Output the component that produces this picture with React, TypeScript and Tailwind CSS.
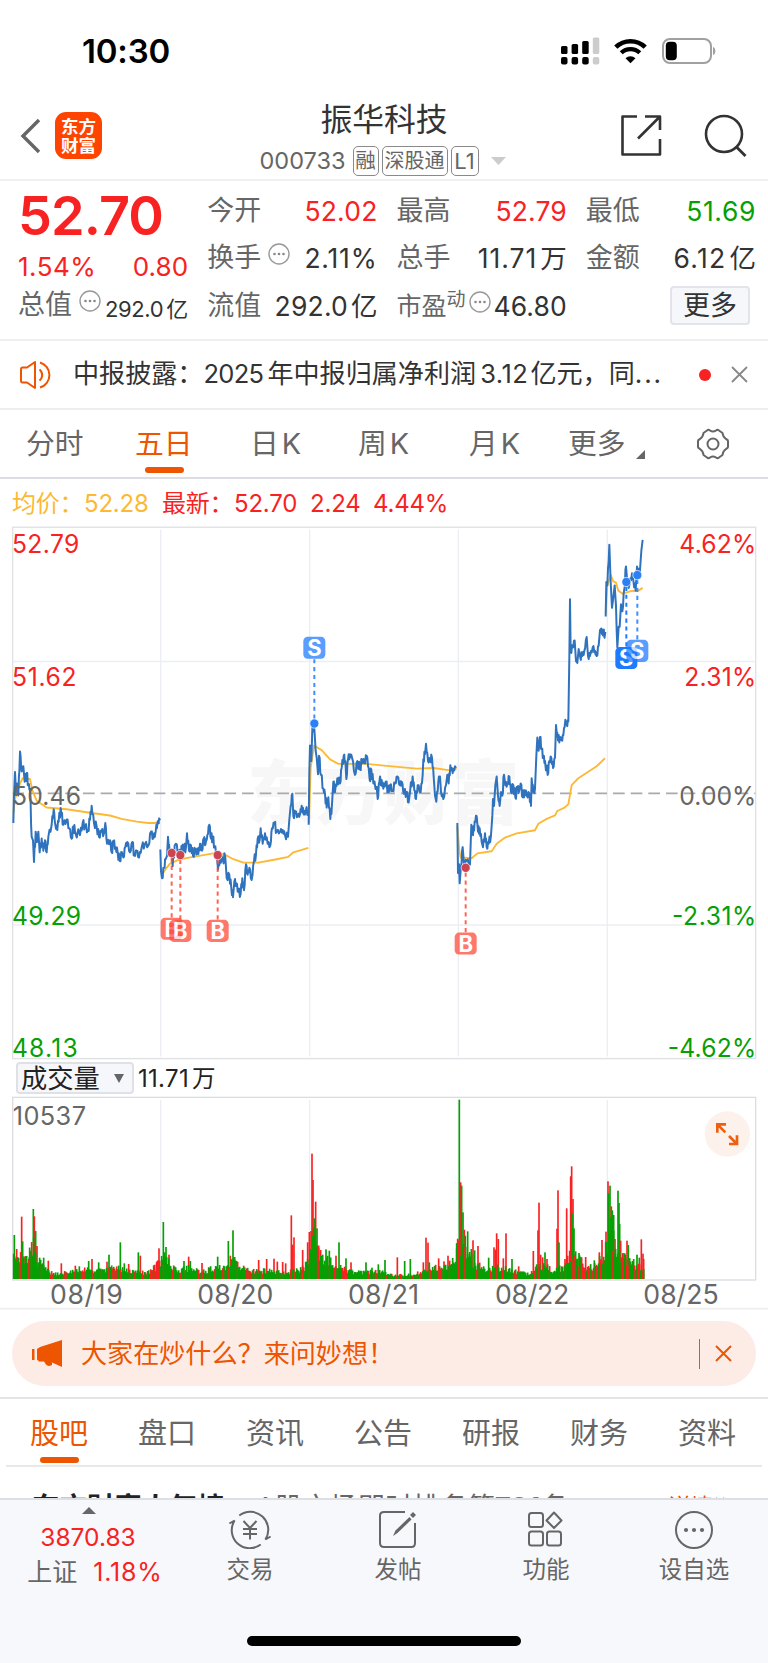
import React from "react";

type Point = [number, number];
type Bar = [number, number, string];

const RED = "#f82222";
const GREEN = "#069f04";
const BLUE = "#2f73bf";
const GRAY = "#666666";

const priceDays: Point[][] = [
  [
    [40, 880], [42, 800], [45, 732], [48, 790], [51, 765], [55, 800], [60, 672], [65, 730], [70, 715], [74, 760],
    [80, 735], [85, 770], [90, 780], [95, 920], [99, 930], [102, 993], [107, 905], [111, 935], [115, 905], [119, 965],
    [125, 925], [130, 960], [135, 930], [140, 965], [145, 920], [155, 885], [161, 840], [166, 885], [172, 900],
    [178, 850], [184, 850], [190, 885], [200, 870], [208, 895], [215, 925], [220, 890], [225, 905], [240, 915],
    [248, 880], [255, 890], [264, 900], [270, 870], [275, 830], [282, 880], [290, 890], [297, 920], [304, 905],
    [312, 910], [316, 880], [321, 940], [330, 930], [335, 965], [340, 935], [347, 950], [353, 965], [359, 990],
    [366, 965], [370, 980], [376, 950], [382, 935], [390, 965], [397, 935], [403, 975], [410, 960], [417, 980],
    [425, 950], [435, 940], [445, 945], [453, 905], [460, 925], [467, 905], [473, 875], [480, 872],
  ],
  [
    [481, 957], [483, 1020], [486, 1040], [492, 1010], [497, 985], [501, 975], [504, 920], [509, 965], [515, 965],
    [518, 1005], [524, 945], [528, 940], [535, 965], [541, 975], [546, 950], [552, 955], [558, 950], [561, 910],
    [567, 960], [573, 945], [579, 975], [586, 955], [595, 970], [600, 940], [606, 960], [611, 925], [617, 940],
    [622, 915], [628, 885], [633, 925], [638, 920], [644, 950], [650, 965], [654, 1015], [660, 985], [668, 985],
    [676, 980], [680, 1040], [688, 1030], [694, 1070], [699, 1095], [703, 1050], [709, 1055], [715, 1080],
    [722, 1085], [727, 1040], [732, 1075], [738, 1000], [743, 1030], [748, 1010], [755, 1045], [762, 990],
    [768, 970], [773, 925], [779, 930], [782, 895], [788, 940], [795, 910], [803, 940], [811, 945], [816, 895],
    [823, 880], [830, 905], [840, 905], [848, 900], [855, 915], [864, 920], [868, 870], [872, 830], [877, 795],
    [880, 860], [886, 850], [893, 860], [900, 855], [905, 830], [911, 855], [917, 845], [925, 845],
  ],
  [
    [926, 885], [928, 730], [930, 655], [934, 700], [937, 605], [943, 605], [947, 670], [950, 690], [954, 738],
    [957, 685], [963, 740], [970, 780], [975, 795], [980, 835], [985, 805], [991, 868], [996, 825], [1000, 760],
    [1005, 790], [1012, 750], [1020, 765], [1025, 720], [1031, 685], [1036, 700], [1039, 752], [1044, 695],
    [1050, 680], [1056, 690], [1065, 740], [1072, 700], [1080, 725], [1086, 695], [1093, 705], [1100, 685],
    [1106, 720], [1109, 755], [1114, 725], [1120, 765], [1130, 775], [1133, 810], [1138, 760], [1145, 755],
    [1150, 780], [1157, 760], [1165, 790], [1170, 770], [1178, 785], [1185, 765], [1192, 745], [1200, 770],
    [1205, 760], [1212, 795], [1220, 790], [1226, 820], [1230, 790], [1238, 745], [1243, 785], [1248, 810],
    [1253, 770], [1262, 790], [1268, 740], [1270, 695], [1275, 680], [1278, 650], [1284, 700], [1290, 695],
    [1296, 690], [1301, 745], [1305, 800], [1309, 818], [1315, 760], [1320, 745], [1323, 790], [1330, 810],
    [1338, 770], [1342, 740], [1346, 765], [1351, 712], [1358, 735], [1365, 715], [1368, 720],
  ],
  [
    [1372, 880], [1374, 1025], [1377, 1000], [1379, 1055], [1383, 1005], [1388, 950], [1392, 1000], [1400, 990],
    [1410, 1000], [1414, 885], [1419, 915], [1424, 875], [1430, 860], [1434, 905], [1439, 895], [1445, 935],
    [1449, 950], [1455, 910], [1460, 950], [1466, 940], [1473, 915], [1477, 860], [1479, 810], [1482, 830],
    [1486, 770], [1490, 745], [1494, 800], [1499, 830], [1503, 790], [1507, 800], [1512, 740], [1516, 770],
    [1522, 765], [1528, 745], [1533, 790], [1540, 770], [1546, 805], [1552, 780], [1558, 785], [1562, 765],
    [1568, 805], [1574, 785], [1580, 800], [1588, 795], [1593, 830], [1595, 750], [1600, 790], [1605, 780],
    [1609, 685], [1612, 632], [1616, 670], [1620, 630], [1625, 665], [1630, 690], [1635, 700], [1643, 740],
    [1648, 700], [1654, 690], [1659, 720], [1665, 690], [1668, 595], [1674, 640], [1680, 630], [1685, 640],
    [1690, 625], [1696, 580], [1700, 595], [1705, 585], [1708, 400], [1710, 230], [1712, 380], [1718, 370],
    [1724, 350], [1728, 410], [1732, 415], [1736, 375], [1740, 395], [1747, 395], [1753, 380], [1760, 340],
    [1764, 395], [1770, 395], [1778, 370], [1785, 380], [1790, 395], [1796, 365], [1800, 320], [1804, 315],
    [1809, 335], [1816, 325],
  ],
  [
    [1817, 280], [1819, 180], [1822, 190], [1828, 72], [1832, 180], [1836, 255], [1840, 225], [1844, 190],
    [1848, 250], [1850, 320], [1852, 370], [1856, 310], [1859, 310], [1863, 245], [1867, 265], [1873, 200],
    [1878, 135], [1882, 180], [1888, 190], [1896, 155], [1900, 175], [1907, 205], [1911, 135], [1915, 150],
    [1920, 145], [1924, 90], [1928, 58],
  ],
];

const averageLines = [
  "M40 850L45 810L60 765L68 750L90 752L97 785L110 815L140 835L200 840L270 850L330 858L365 868L410 876L445 880L480 880",
  "M486 1030L500 1010L510 998L540 985L580 978L640 968L672 970L700 985L730 995L775 995L830 985L865 978L880 965L925 952",
  "M927 880L932 720L942 655L965 668L990 695L1015 708L1100 708L1160 714L1250 722L1300 720L1350 727L1370 722",
  "M1372 890L1378 960L1382 980L1415 982L1432 968L1475 962L1490 940L1515 922L1550 910L1605 901L1615 882L1640 868L1665 858L1672 845L1692 836L1705 825L1715 770L1735 750L1790 715L1815 692",
  "M1817 270L1822 190L1832 160L1840 178L1848 182L1855 205L1868 214L1890 207L1915 205L1928 197",
];

const markers = [
  { x: 515, y: 967, boxY: 1187, side: "B", dim: true },
  { x: 541, y: 973, boxY: 1193, side: "B", dim: true },
  { x: 653, y: 973, boxY: 1193, side: "B", dim: true },
  { x: 943, y: 591, boxY: 371, side: "S", dim: true },
  { x: 1397, y: 1010, boxY: 1230, side: "B", dim: true },
  { x: 1879, y: 180, boxY: 401, side: "S", dim: false },
  { x: 1912, y: 160, boxY: 380, side: "S", dim: true },
];

const leftLabels = [
  { text: "52.79", y: 96, fill: RED, width: 196 },
  { text: "51.62", y: 481, fill: RED, width: 188 },
  { text: "50.46", y: 828, fill: GRAY, width: 201 },
  { text: "49.29", y: 1175, fill: GREEN, width: 201 },
  { text: "48.13", y: 1560, fill: GREEN, width: 191 },
];

const rightLabels = [
  { text: "4.62%", y: 96, fill: RED, width: 226 },
  { text: "2.31%", y: 481, fill: RED, width: 211 },
  { text: "0.00%", y: 828, fill: GRAY, width: 226 },
  { text: "-2.31%", y: 1175, fill: GREEN, width: 248 },
  { text: "-4.62%", y: 1560, fill: GREEN, width: 261 },
];

const dates = [
  { text: "08/19", x: 152, width: 214 },
  { text: "08/20", x: 594, width: 224 },
  { text: "08/21", x: 1046, width: 209 },
  { text: "08/22", x: 1487, width: 219 },
  { text: "08/25", x: 1932, width: 222 },
];

// average height of the volume bars along the x axis
const volumeBase: Point[] = [
  [40, 60], [60, 70], [85, 60], [98, 110], [112, 60], [125, 40], [150, 20], [180, 16], [230, 25], [270, 28], [300, 25],
  [350, 35], [380, 25], [410, 22], [440, 18], [465, 35], [480, 60], [500, 65], [515, 35], [545, 28], [580, 35],
  [600, 20], [650, 35], [680, 30], [700, 60], [720, 30], [760, 25], [800, 25], [860, 20], [880, 30], [910, 32],
  [925, 60], [940, 120], [960, 70], [1000, 45], [1040, 30], [1060, 20], [1100, 20], [1140, 25], [1180, 10],
  [1230, 14], [1265, 20], [1290, 28], [1320, 40], [1360, 45], [1375, 110], [1400, 70], [1430, 45], [1460, 25],
  [1490, 35], [1530, 30], [1565, 20], [1590, 14], [1610, 35], [1640, 45], [1660, 20], [1680, 35], [1700, 40],
  [1720, 60], [1735, 60], [1760, 35], [1790, 40], [1810, 70], [1830, 160], [1850, 85], [1890, 55], [1910, 40],
  [1934, 38],
];

const volumeSpikes: Bar[] = [
  [43, 132, GREEN], [50, 90, RED], [65, 187, RED], [68, 113, GREEN], [72, 68, RED], [88, 66, GREEN],
  [100, 210, GREEN], [103, 188, RED], [107, 144, GREEN], [111, 99, RED], [131, 64, GREEN], [145, 55, RED],
  [184, 47, RED], [226, 40, RED], [238, 38, GREEN], [266, 54, GREEN], [276, 60, RED], [296, 50, GREEN],
  [321, 52, RED], [327, 73, GREEN], [361, 110, GREEN], [373, 47, GREEN], [386, 45, RED], [415, 80, GREEN],
  [421, 70, RED], [470, 52, RED], [477, 92, RED], [490, 171, GREEN], [498, 96, GREEN], [507, 73, RED],
  [552, 54, GREEN], [566, 67, RED], [571, 54, GREEN], [606, 48, RED], [653, 67, GREEN], [685, 114, GREEN],
  [691, 70, RED], [699, 146, GREEN], [704, 66, GREEN], [731, 40, RED], [776, 57, RED], [800, 60, RED],
  [822, 61, RED], [832, 52, RED], [848, 51, RED], [857, 47, RED], [874, 191, RED], [878, 103, RED],
  [882, 125, RED], [908, 87, RED], [923, 110, RED], [928, 141, RED], [933, 144, RED], [936, 376, RED],
  [939, 297, RED], [943, 182, GREEN], [947, 232, RED], [951, 152, GREEN], [956, 93, GREEN], [962, 87, RED],
  [978, 89, GREEN], [988, 85, GREEN], [1008, 70, RED], [1017, 110, GREEN], [1038, 62, GREEN], [1053, 50, RED],
  [1098, 50, GREEN], [1116, 34, GREEN], [1135, 44, GREEN], [1155, 57, GREEN], [1192, 65, RED], [1214, 54, GREEN],
  [1231, 60, GREEN], [1270, 50, RED], [1278, 124, RED], [1284, 109, RED], [1288, 50, GREEN], [1316, 62, RED],
  [1332, 53, RED], [1344, 70, RED], [1358, 63, GREEN], [1370, 92, GREEN], [1373, 121, RED], [1378, 538, GREEN],
  [1382, 290, RED], [1385, 280, GREEN], [1389, 200, GREEN], [1393, 148, RED], [1396, 130, GREEN],
  [1403, 143, GREEN], [1414, 90, GREEN], [1419, 116, RED], [1424, 86, GREEN], [1434, 99, RED], [1466, 64, GREEN],
  [1482, 95, RED], [1486, 88, RED], [1490, 137, RED], [1495, 120, RED], [1510, 62, RED], [1518, 137, RED],
  [1536, 60, GREEN], [1556, 38, RED], [1600, 84, RED], [1614, 146, RED], [1617, 229, RED], [1622, 73, RED],
  [1628, 65, RED], [1635, 80, GREEN], [1641, 60, RED], [1671, 151, RED], [1674, 266, RED], [1677, 110, GREEN],
  [1695, 60, RED], [1700, 212, RED], [1703, 70, RED], [1709, 85, RED], [1712, 308, RED], [1715, 338, RED],
  [1719, 240, RED], [1717, 197, GREEN], [1722, 152, GREEN], [1727, 83, GREEN], [1737, 78, GREEN],
  [1757, 66, RED], [1783, 56, GREEN], [1798, 80, RED], [1806, 117, RED], [1818, 142, RED], [1824, 293, RED],
  [1826, 257, GREEN], [1830, 280, GREEN], [1834, 218, RED], [1837, 206, GREEN], [1841, 192, GREEN],
  [1845, 120, RED], [1854, 265, GREEN], [1857, 228, GREEN], [1859, 165, GREEN], [1862, 115, RED],
  [1869, 78, RED], [1876, 73, RED], [1881, 115, RED], [1885, 102, GREEN], [1898, 54, GREEN], [1911, 73, GREEN],
  [1918, 64, GREEN], [1924, 119, RED], [1929, 76, RED], [1931, 60, RED],
];

const noise = (n: number) => {
  const v = Math.sin(n * 12.9898) * 43758.5453;
  return v - Math.floor(v);
};

const toPath = (points: Point[]) => {
  let d = `M${points[0][0]} ${points[0][1]}`;
  for (let i = 1; i < points.length; i++) {
    const [x0, y0] = points[i - 1];
    const [x1, y1] = points[i];
    if (x1 - x0 > 4) {
      const s = noise(x0 + i) > 0.5 ? 1 : -1;
      const amp = 5 + noise(i) * 9;
      d += `L${x0 + (x1 - x0) * 0.35} ${y0 + (y1 - y0) * 0.35 + s * amp}`;
      d += `L${x0 + (x1 - x0) * 0.65} ${y0 + (y1 - y0) * 0.65 - s * amp}`;
    }
    d += `L${x1} ${y1}`;
  }
  return d;
};

const baseAt = (x: number) => {
  const i = volumeBase.findIndex((p) => p[0] > x);
  if (i < 1) return volumeBase[volumeBase.length - 1][1];
  const [x0, y0] = volumeBase[i - 1];
  const [x1, y1] = volumeBase[i];
  return y0 + ((x - x0) / (x1 - x0)) * (y1 - y0);
};

const volumeNoise: Bar[] = [];
for (let x = 41; x < 1934; x += 3) {
  const redZone =
    (x > 150 && x < 170) || (x > 420 && x < 480) || (x > 740 && x < 800) || (x > 1740 && x < 1810) || x > 1865;
  const color = noise(x * 1.7) > (redZone ? 0.4 : 0.78) ? RED : GREEN;
  volumeNoise.push([x, baseAt(x) * (0.6 + noise(x) * 0.7), color]);
}

const More = () => (
  <svg className="size-[22px] shrink-0" viewBox="0 0 22 22">
    <circle cx="11" cy="11" r="10" fill="none" stroke="#999" strokeWidth="1.4" />
    <circle cx="6.5" cy="11" r="1.3" fill="#888" />
    <circle cx="11" cy="11" r="1.3" fill="#888" />
    <circle cx="15.5" cy="11" r="1.3" fill="#888" />
  </svg>
);

const StatusBar = () => (
  <div className="flex h-[91px] items-start justify-between pl-[82px] pr-[52px] pt-[31px]">
    <span className="text-[33px] font-semibold leading-[40px] tracking-[-0.2px] text-black">10:30</span>
    <div className="flex items-center pt-[6px]">
      <svg width="39" height="28" viewBox="0 0 39 28">
        <g fill="#000">
          <rect x="0" y="9" width="6.5" height="8" rx="1.5" />
          <rect x="10.6" y="7" width="6.5" height="10" rx="1.5" />
          <rect x="21.2" y="4" width="6.5" height="13" rx="1.5" />
          <rect x="0" y="20" width="6.5" height="7.5" rx="2" />
          <rect x="10.6" y="20" width="6.5" height="7.5" rx="2" />
          <rect x="21.2" y="20" width="6.5" height="7.5" rx="2" />
        </g>
        <g fill="#cccccc">
          <rect x="31.8" y="0.5" width="6.5" height="16.5" rx="1.5" />
          <rect x="31.8" y="20" width="6.5" height="7.5" rx="2" />
        </g>
      </svg>
      <svg className="ml-[14px]" width="33" height="26" viewBox="0 0 33 26">
        <path d="M1.8 9.2a21 21 0 0 1 29.4 0" fill="none" stroke="#000" strokeWidth="4.6" />
        <path d="M7.2 14.8a13.4 13.4 0 0 1 18.6 0" fill="none" stroke="#000" strokeWidth="4.2" />
        <path d="M11.5 20.2a7.4 7.4 0 0 1 10 0L16.5 25.2z" fill="#000" />
      </svg>
      <svg className="ml-[15px]" width="54" height="26" viewBox="0 0 54 26">
        <rect x="1" y="1" width="48" height="24" rx="7" fill="none" stroke="#a0a0a0" strokeWidth="2" />
        <rect x="3.8" y="3.8" width="11" height="18.4" rx="4" fill="#000" />
        <path d="M51 9c3.2 1 3.2 7 0 8z" fill="#a0a0a0" />
      </svg>
    </div>
  </div>
);

const Header = () => (
  <div className="flex h-[90px] items-start border-b-2 border-[#f0f0f0] pl-[20px]">
    <svg className="mt-[27px]" width="22" height="36" viewBox="0 0 22 36">
      <path d="M19 2L3 18L19 34" fill="none" stroke="#666" strokeWidth="3.4" />
    </svg>
    <div className="ml-[13px] mt-[21px] flex size-[47px] flex-col items-center justify-center rounded-[11px] bg-[#ff4400] text-[17.5px] font-bold leading-[19px] text-white">
      <span>东方</span>
      <span>财富</span>
    </div>
    <div className="ml-[136px] flex w-[292px] flex-col items-center">
      <h1 className="mt-[8px] text-[31.8px] leading-[42px] text-[#333]">振华科技</h1>
      <div className="mt-[3px] flex w-[249px] items-center text-[22px] leading-[34px] text-[#666]">
        <span className="w-[93px] text-[23.5px] tracking-[0px]">000733</span>
        <span className="flex h-[30px] w-[26px] items-center justify-center rounded-[5px] border-[1.5px] border-[#8a8a8a] text-[20.5px]">
          融
        </span>
        <span className="ml-[3px] flex h-[30px] w-[66px] items-center justify-center rounded-[5px] border-[1.5px] border-[#8a8a8a] text-[20px]">
          深股通
        </span>
        <span className="ml-[3px] flex h-[30px] w-[28px] items-center justify-center rounded-[5px] border-[1.5px] border-[#8a8a8a] text-[22px]">
          L1
        </span>
        <svg className="ml-[12px] shrink-0" width="15" height="8" viewBox="0 0 15 8">
          <path d="M0 0h15L7.5 8z" fill="#ccc" />
        </svg>
      </div>
    </div>
    <svg className="ml-[89px] mt-[23px]" width="44" height="44" viewBox="0 0 44 44">
      <path
        d="M18 2.5H3.5V40.5H41V25M26 2.5H41V16M41 2.5L19 24.5"
        fill="none"
        stroke="#333"
        strokeWidth="2.6"
        strokeLinejoin="round"
      />
    </svg>
    <svg className="ml-[41px] mt-[23px]" width="44" height="44" viewBox="0 0 44 44">
      <circle cx="20" cy="20" r="18" fill="none" stroke="#333" strokeWidth="2.6" />
      <path d="M32 32.5L41.5 42" stroke="#333" strokeWidth="2.8" />
    </svg>
  </div>
);

const Stat = ({
  label,
  value,
  unit,
  className = "tracking-[0.2px] text-[#333]",
  hint,
}: {
  label: string;
  value: string;
  unit?: string;
  className?: string;
  hint?: boolean;
}) => (
  <div className="flex h-[47.5px] items-center whitespace-nowrap text-[26.5px]">
    <span className="text-[27px] text-[#666]">{label}</span>
    {hint && (
      <span className="ml-[7px] pb-[8px]">
        <More />
      </span>
    )}
    <span className={`ml-auto ${className}`}>{value}</span>
    {unit && <span className="ml-[3px] text-[#333]">{unit}</span>}
  </div>
);

const Quote = () => (
  <div className="grid h-[160px] grid-cols-4 gap-x-[19px] border-b-2 border-[#eeeeee] pl-[18px] pr-[12px] leading-[32px]">
    <div className="whitespace-nowrap">
      <div className="mt-[4px] h-[61px] text-[54px] font-semibold leading-[61px] tracking-[-0.9px] text-[#f82222]">52.70</div>
      <div className="mt-[4px] flex h-[34px] items-center justify-between text-[26px] text-[#f82222]">
        <span className="tracking-[0.5px]">1.54%</span>
        <span className="tracking-[0.1px]">0.80</span>
      </div>
      <div className="flex h-[42px] items-center">
        <span className="text-[27px] text-[#666]">总值</span>
        <span className="ml-[7px] pb-[8px]">
          <More />
        </span>
        <span className="ml-auto pt-[7px] text-[22px] tracking-[-0.4px] text-[#333]">292.0</span>
        <span className="ml-[3px] pt-[7px] text-[22px] text-[#333]">亿</span>
      </div>
    </div>
    <div className="pt-[6px]">
      <Stat label="今开" value="52.02" className="tracking-[0.2px] text-[#f82222]" />
      <Stat label="换手" value="2.11%" className="tracking-[0.8px] text-[#333]" hint />
      <Stat label="流值" value="292.0" unit="亿" />
    </div>
    <div className="pt-[6px]">
      <Stat label="最高" value="52.79" className="tracking-[0.1px] text-[#f82222]" />
      <Stat label="总手" value="11.71" unit="万" className="tracking-[1px] text-[#333]" />
      <div className="flex h-[47.5px] items-center">
        <span className="text-[25px] text-[#666]">市盈</span>
        <span className="pb-[12px] text-[19px] text-[#666]">动</span>
        <span className="ml-[3px] pb-[8px]">
          <More />
        </span>
        <span className="ml-auto text-[26.5px] tracking-[0.1px] text-[#333]">46.80</span>
      </div>
    </div>
    <div className="pt-[6px]">
      <Stat label="最低" value="51.69" className="tracking-[0.6px] text-[#069f04]" />
      <Stat label="金额" value="6.12" unit="亿" className="tracking-[1.3px] text-[#333]" />
      <div className="flex h-[47.5px] items-center justify-end pr-[6px]">
        <button className="h-[39px] w-[80px] rounded-[4px] border-2 border-[#e2e4ea] bg-[#f6f7fa] text-[27px] leading-[33px] text-[#333]">
          更多
        </button>
      </div>
    </div>
  </div>
);

const Notice = () => (
  <div className="flex h-[69px] items-center border-b-2 border-[#eeeeee] pl-[19px] pr-[20px]">
    <svg width="34" height="30" viewBox="0 0 34 30" fill="none" stroke="#ee5500" strokeWidth="2">
      <path d="M16 2L8 7.5H3.5Q2 7.5 2 9.5V20.5Q2 22.5 3.5 22.5H8L16 28Z" strokeLinejoin="round" />
      <path d="M20.5 9.5a7 7 0 0 1 0 11M21 2.5a13 13 0 0 1 0 25" />
    </svg>
    <span className="ml-[20px] w-[592px] whitespace-nowrap pb-[2px] text-[26.1px] text-[#333]">
      中报披露：<span className="mr-[4px] text-[25.5px] tracking-[-0.7px]">2025</span>年中报归属净利润
      <span className="ml-[4px] mr-[2px] text-[25.5px] tracking-[0.5px]">3.12</span>亿元，同
      <span className="tracking-[1.9px]">...</span>
    </span>
    <span className="ml-[34px] size-[12px] rounded-full bg-[#f82222]" />
    <svg className="ml-auto" width="17" height="17" viewBox="0 0 17 17">
      <path d="M1 1L16 16M16 1L1 16" stroke="#888" strokeWidth="1.8" />
    </svg>
  </div>
);

const periods = [
  { label: "分时", className: "ml-[26px] w-[109px]" },
  { label: "五日", className: "w-[115px] text-[#ee5500]" },
  { label: "日K", className: "w-[108px]" },
  { label: "周K", className: "w-[111px]" },
  { label: "月K", className: "w-[99px]" },
  { label: "更多", className: "w-[68px]" },
];

const PeriodTabs = () => (
  <div className="flex h-[69px] items-start border-b-2 border-[#dcdde2] text-[28.8px] text-[#666]">
    {periods.map((p) => (
      <div key={p.label} className={`shrink-0 pt-[14px] leading-[40px] ${p.className}`}>
        {p.label.endsWith("K") ? (
          <>
            {p.label[0]}
            <span className="ml-[3px]">K</span>
          </>
        ) : (
          p.label
        )}
        {p.label === "五日" && <div className="ml-[10px] mt-[3px] h-[6px] w-[39px] rounded-[3px] bg-[#ee5500]" />}
      </div>
    ))}
    <svg className="mt-[40px]" width="9" height="9" viewBox="0 0 9 9">
      <path d="M9 0V9H0z" fill="#666" />
    </svg>
    <svg className="ml-[51px] mt-[18px]" width="34" height="32" viewBox="0 0 34 32" fill="none" stroke="#666" strokeWidth="2">
      <path
        d="M11 2.5Q12.5 1 14 2.5Q17 4.5 20 2.5Q21.5 1 23 2.5L26.5 5Q27 9 30 11Q32.5 12 32 14V18Q32.5 20 30 21Q27 23 26.5 27L23 29.5Q21.5 31 20 29.5Q17 27.5 14 29.5Q12.5 31 11 29.5L7.5 27Q7 23 4 21Q1.5 20 2 18V14Q1.5 12 4 11Q7 9 7.5 5Z"
        strokeLinejoin="round"
      />
      <circle cx="17" cy="16" r="5.5" />
    </svg>
  </div>
);

const PriceChart = () => (
  <svg className="block h-[540px] w-full" viewBox="0 0 2304 1568" preserveAspectRatio="none">
    <text x="742" y="868" fontSize="204" fontWeight="900" fill="#f7f7f7" textLength="816">
      东方财富
    </text>
    <g stroke="#eceef4" strokeWidth="4">
      {[482, 929, 1375, 1822].map((x) => (
        <path key={x} d={`M${x} 28V1558`} />
      ))}
      <path d="M38 411H2266M38 1176H2266" />
    </g>
    <rect x="38" y="21" width="2229" height="1543" fill="none" stroke="#e0e1e5" strokeWidth="4" />
    <path d="M38 794H2266" stroke="#aaaaaa" strokeWidth="5" strokeDasharray="35 18" strokeDashoffset="1" />
    {averageLines.map((d) => (
      <path key={d} d={d} fill="none" stroke="#fdb933" strokeWidth="5.5" strokeLinejoin="round" />
    ))}
    {priceDays.map((points, i) => (
      <path key={i} d={toPath(points)} fill="none" stroke={BLUE} strokeWidth="6" strokeLinejoin="round" />
    ))}
    {leftLabels.map((l) => (
      <text key={l.text} x="36" y={l.y} fontSize="74" fill={l.fill} textLength={l.width + 6}>
        {l.text}
      </text>
    ))}
    {rightLabels.map((l) => (
      <text key={l.text} x={2264 - l.width} y={l.y} fontSize="74" fill={l.fill} textLength={l.width + 5}>
        {l.text}
      </text>
    ))}
    {markers.map((m) => {
      const fill = m.side === "B" ? "#ff4a38" : "#1e7bff";
      const dir = m.boxY > m.y ? 1 : -1;
      return (
        <g key={m.x}>
          <path
            d={`M${m.x} ${m.y + dir * 14}V${m.boxY - dir * 32}`}
            stroke={fill}
            strokeWidth="6"
            strokeDasharray="12 11"
            opacity={m.dim ? 0.85 : 1}
          />
          <circle cx={m.x} cy={m.y} r="13.500" fill={m.side === "B" ? "#cc4450" : "#2c80f5"} stroke="#fff" strokeWidth="2" />
          <g opacity={m.dim ? 0.74 : 1}>
            <rect x={m.x - 33} y={m.boxY - 32} width="66" height="64" rx="13" fill={fill} />
            <text x={m.x} y={m.boxY + 24} fontSize="66" fontWeight="700" fill="#fff" textAnchor="middle">
              {m.side}
            </text>
          </g>
        </g>
      );
    })}
  </svg>
);

const VolumeChart = () => (
  <svg className="block h-[215px] w-full" viewBox="0 135 2304 645">
    <g stroke="#eceef4" strokeWidth="4">
      {[482, 929, 1375, 1822].map((x) => (
        <path key={x} d={`M${x} 150V688`} />
      ))}
    </g>
    <rect x="38" y="142" width="2229" height="548" fill="none" stroke="#dcdde2" strokeWidth="4" />
    {[...volumeSpikes, ...volumeNoise].map(([x, h, fill], i) => (
      <rect key={i} x={x - 2.5} y={687 - h} width="5" height={h} fill={fill} />
    ))}
    <text x="38" y="225" fontSize="76" fill={GRAY} textLength="220">
      10537
    </text>
    {dates.map((d) => (
      <text key={d.text} x={d.x - 2} y="762" fontSize="80" fill={GRAY} textLength={d.width + 4}>
        {d.text}
      </text>
    ))}
    <circle cx="2182" cy="252" r="68" fill="#fdf1ec" />
    <path
      d="M2152 248V223H2178M2152 223L2176 247M2187 282H2211V256M2211 282L2187 258"
      fill="none"
      stroke="#ee6010"
      strokeWidth="8"
    />
    <path d="M0 776H2304" stroke="#eeeeee" strokeWidth="5" />
  </svg>
);

const Charts = () => (
  <div>
    <div className="flex h-[41px] items-center whitespace-nowrap pl-[12px] pt-[8px] text-[24px] tracking-[-0.2px] text-[#f82222]">
      <span className="w-[72px] text-[#fdb933]">均价：</span>
      <span className="w-[78px] text-[#fdb933]">52.28</span>
      <span className="w-[72px]">最新：</span>
      <span className="w-[76px]">52.70</span>
      <span className="w-[63px]">2.24</span>
      <span>4.44%</span>
    </div>
    <PriceChart />
    <div className="flex h-[35px] items-center pl-[16px] pt-[1px]">
      <div className="flex h-[32px] w-[118px] items-center rounded-[4px] border-2 border-[#dfe1e7] bg-[#f6f7fa] pl-[3px] text-[26.3px] leading-[28px] text-[#222]">
        <span className="pt-[2px]">成交量</span>
        <svg className="ml-[14px]" width="10" height="9" viewBox="0 0 10 9">
          <path d="M0 0h10L5 9z" fill="#666" />
        </svg>
      </div>
      <span className="ml-[4px] pt-[1px] text-[24px] tracking-[0.3px] text-[#222]">
        11.71<span className="ml-[3px] text-[23.5px]">万</span>
      </span>
    </div>
    <VolumeChart />
  </div>
);

const AskBanner = () => (
  <div className="h-[89px] border-b-2 border-[#e4e4e8] px-[12px] pt-[11px]">
    <div className="flex h-[65px] items-center rounded-full bg-[#fdece6] pl-[20px] pr-[24px] text-[#ee5500]">
      <svg width="30" height="28" viewBox="0 0 30 28" fill="#ee5500">
        <path d="M0 9h2.5v11H0zM5 9L8 7L30 0V27L20 22.5V25Q16 27 14 24.5L12 21.5H7L5 19.5z" />
      </svg>
      <span className="ml-[19px] text-[26.1px]">大家在炒什么？来问妙想！</span>
      <span className="ml-auto h-[30px] w-[1.5px] bg-[#ee5500]" />
      <svg className="ml-[15px]" width="17" height="17" viewBox="0 0 17 17">
        <path d="M1 1L16 16M16 1L1 16" stroke="#ee5500" strokeWidth="2" />
      </svg>
    </div>
  </div>
);

const sections = ["股吧", "盘口", "资讯", "公告", "研报", "财务", "资料"];

const SectionTabs = () => (
  <div className="mx-[6px] flex h-[68px] border-b-2 border-[#e8e8e8] pl-[24px] text-[29px] leading-[40px] text-[#666]">
    {sections.map((s, i) => (
      <div key={s} className={`w-[108px] shrink-0 pt-[15px] ${i === 0 ? "text-[#ee5500]" : ""}`}>
        {s}
        {i === 0 && <div className="ml-[10px] mt-[3px] h-[6px] w-[39px] rounded-[3px] bg-[#ee5500]" />}
      </div>
    ))}
  </div>
);

const RankRow = () => (
  <div className="flex h-[31px] items-start overflow-hidden whitespace-nowrap pl-[32px] pr-[37px] pt-[22px] text-[27.5px] leading-[36px] text-[#666]">
    <span className="w-[224px] font-bold text-[#222]">东方财富人气榜</span>
    <span>
      A股市场即时排名第<span className="font-bold text-[#ee5500]">791</span>名
    </span>
    <span className="ml-auto text-[22.5px] text-[#ee5500]">详情</span>
    <svg className="mt-[8px]" width="18" height="16" viewBox="0 0 18 16" fill="none" stroke="#ee5500" strokeWidth="2">
      <path d="M3 1L9 8L3 15M10 1L16 8L10 15" />
    </svg>
  </div>
);

const actions = [
  {
    label: "交易",
    width: "w-[148px]",
    icon: (
      <>
        <path d="M11.3 5.5A18 18 0 0 1 37.4 29.5L42.6 26.5" />
        <path d="M32.7 34.5A18 18 0 0 1 6.6 10.5L1.4 13.500" />
        <path d="M15.5 11L22 18L28.5 11M22 18V29.5M15 19H29M15 24H29" />
      </>
    ),
  },
  {
    label: "发帖",
    width: "w-[148px]",
    icon: (
      <>
        <path d="M29 2H8Q4 2 4 5.5V33Q4 37 8 37H35.5Q39 37 39 33V13" />
        <path d="M19.5 20.5L33.5 7L35.5 9.5L21.5 23L17 26Z" fill="#666" stroke="none" />
        <path d="M35.5 6.5L38.5 3.5" strokeWidth="4.2" />
      </>
    ),
  },
  {
    label: "功能",
    width: "w-[148px]",
    icon: (
      <>
        <rect x="5" y="3" width="14" height="14" rx="2.5" />
        <rect x="5" y="21.5" width="14" height="14" rx="2.5" />
        <rect x="23" y="21.5" width="14" height="14" rx="2.5" />
        <path d="M30 2.5L37.5 10.5L30 18L22.5 10.5Z" strokeLinejoin="round" />
      </>
    ),
  },
  {
    label: "设自选",
    width: "w-[148px]",
    icon: (
      <>
        <circle cx="22" cy="20" r="18" />
        <g fill="#666" stroke="none">
          <circle cx="14" cy="20" r="2.1" />
          <circle cx="22" cy="20" r="2.1" />
          <circle cx="30" cy="20" r="2.1" />
        </g>
      </>
    ),
  },
];

const BottomBar = () => (
  <div className="h-[165px] border-t-2 border-[#dddfe5] bg-[#f7f8fb]">
    <div className="flex h-[90px]">
      <div className="flex w-[176px] flex-col items-center">
        <svg className="ml-[2px] mt-[7px]" width="14" height="7" viewBox="0 0 14 7">
          <path d="M7 0L14 7H0z" fill="#666" />
        </svg>
        <span className="mt-[6px] text-[24.5px] leading-[34px] text-[#f82222]">3870.83</span>
        <div className="mt-[1px] flex pl-[14px] text-[25px] leading-[34px]">
          <span className="w-[66px] text-[#666]">上证</span>
          <span className="tracking-[0.8px] text-[#f82222]">1.18%</span>
        </div>
      </div>
      {actions.map((a) => (
        <div key={a.label} className={`flex flex-col items-center ${a.width}`}>
          <svg className="mt-[10px]" width="44" height="39" viewBox="0 0 44 39" fill="none" stroke="#666" strokeWidth="2">
            {a.icon}
          </svg>
          <span className="mt-[4px] text-[23.5px] leading-[34px] text-[#666]">{a.label}</span>
        </div>
      ))}
    </div>
    <div className="mx-auto mt-[46px] h-[10px] w-[274px] rounded-full bg-black" />
  </div>
);

const App = () => {
  return (
    <div className="h-[1663px] w-[768px] overflow-hidden bg-white font-['Inter','Noto_Sans_CJK_SC',sans-serif]">
      <StatusBar />
      <Header />
      <Quote />
      <Notice />
      <PeriodTabs />
      <Charts />
      <AskBanner />
      <SectionTabs />
      <RankRow />
      <BottomBar />
    </div>
  );
};

export default App;
